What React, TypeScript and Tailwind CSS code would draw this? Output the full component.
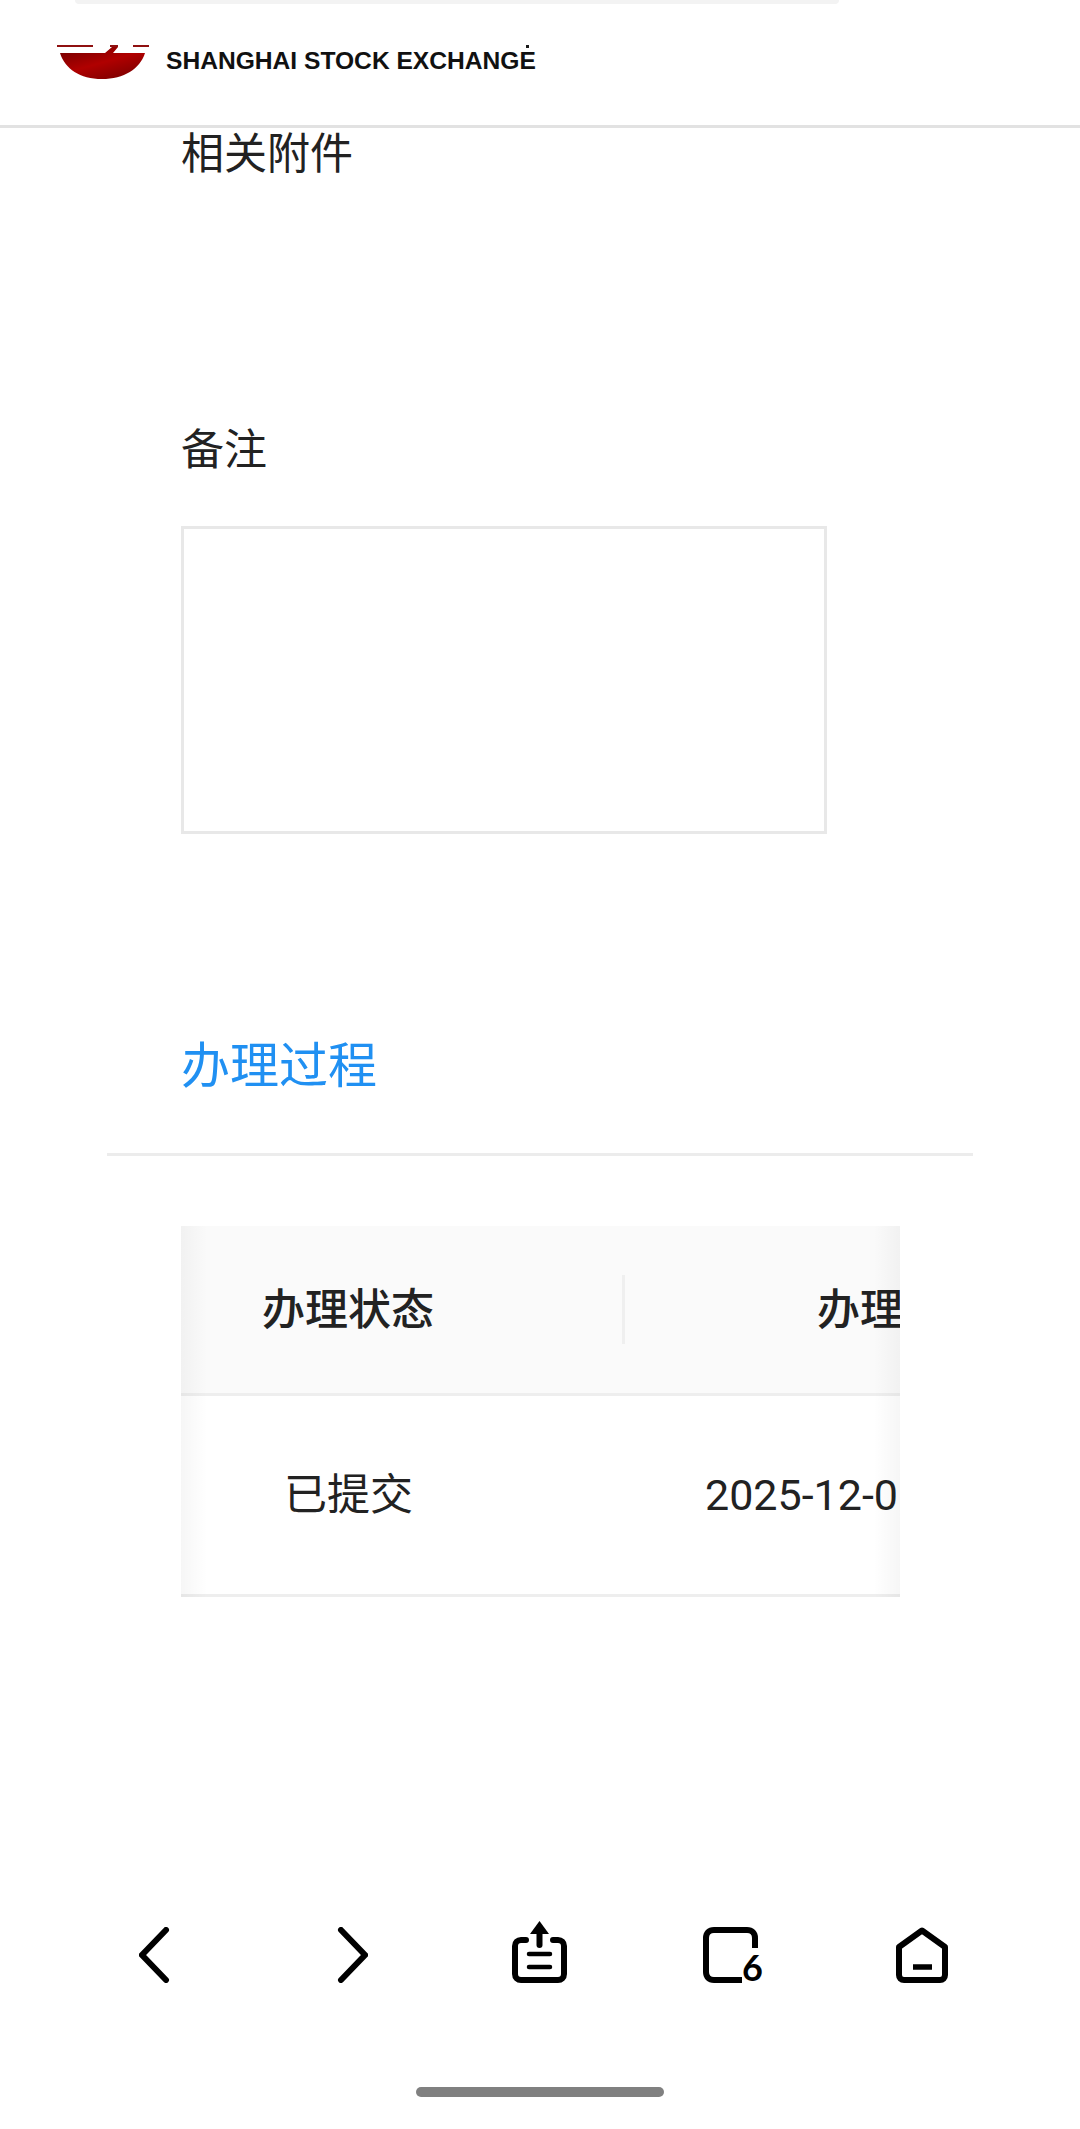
import React from 'react';

const cjk = 'font-["Roboto","Noto_Sans_CJK_SC",sans-serif]';

const Bowl = () => (
  <svg width="94" height="35" viewBox="0 0 94 35" className="shrink-0">
    <defs>
      <linearGradient id="bowl" x1="0" y1="0" x2="0.75" y2="1">
        <stop offset="0" stopColor="#6f0000" />
        <stop offset="0.55" stopColor="#b00000" />
        <stop offset="1" stopColor="#7d0000" />
      </linearGradient>
    </defs>
    <rect x="1" y="0" width="36" height="2" fill="#8f1010" />
    <rect x="54" y="0" width="8" height="2" fill="#8f1010" />
    <rect x="77" y="0" width="16" height="2" fill="#8f1010" />
    <path d="M4 8H49L56 2H62L57 8H89C84 24 68 34 46 34C24 34 9 24 4 8Z" fill="url(#bowl)" />
  </svg>
);

const IconBack = () => (
  <svg width="31" height="56" viewBox="0 0 31 56" fill="none" stroke="#000" strokeWidth="6" strokeLinecap="round" strokeLinejoin="miter">
    <path d="M27 3L3 28L27 53" />
  </svg>
);

const IconForward = () => (
  <svg width="31" height="56" viewBox="0 0 31 56" fill="none" stroke="#000" strokeWidth="6" strokeLinecap="round" strokeLinejoin="miter">
    <path d="M4 3L28 28L4 53" />
  </svg>
);

const IconShare = () => (
  <svg width="55" height="62" viewBox="0 0 55 62" fill="none" stroke="#000" strokeWidth="6" strokeLinecap="round">
    <path d="M14 19H9C5.5 19 3 21.5 3 25V53C3 56.5 5.5 59 9 59H46C49.5 59 52 56.5 52 53V25C52 21.5 49.5 19 46 19H41" />
    <path d="M27.5 12V24" />
    <path d="M27.5 0L37 13H18Z" fill="#000" stroke="none" />
    <path d="M17 33H38M17 46H38" strokeWidth="4.5" />
  </svg>
);

const IconTabs = () => (
  <svg width="60" height="56" viewBox="0 0 60 56" fill="none" stroke="#000" strokeWidth="6">
    <path d="M52 21V11C52 6 49 3 44 3H11C6 3 3 6 3 11V45C3 50 6 53 11 53H39" />
    <text x="39" y="54" fontSize="36" fontFamily="Lato, sans-serif" fontWeight="700" fill="#000" stroke="none">6</text>
  </svg>
);

const IconHome = () => (
  <svg width="52" height="56" viewBox="0 0 52 56" fill="none" stroke="#000" strokeWidth="6" strokeLinejoin="round">
    <path d="M26 3.5L3 20V48C3 51 5 53 8 53H44C47 53 49 51 49 48V20Z" />
    <path d="M17 40H36" strokeWidth="5.5" />
  </svg>
);

export default function App() {
  return (
    <div className={`${cjk} flex h-[2129px] w-[1080px] flex-col overflow-hidden bg-white text-[#222]`}>
      <header className="relative h-[128px] shrink-0 border-b-[3px] border-[#e2e2e2]">
        <div className="ml-[75px] h-1 w-[764px] rounded-b-[12px] bg-[#f3f3f3]" />
        <div className="mt-[41px] ml-[56px] flex items-start">
          <Bowl />
          <span className='mt-[4px] ml-[16px] font-["Liberation_Sans",sans-serif] text-[24.6px] leading-[24px] font-bold text-[#111]'>
            SHANGHAI STOCK EXCHANGE
          </span>
          <span className="absolute top-[45px] left-[526px] h-[3px] w-[3px] bg-[#1a1a1a]" />
        </div>
      </header>

      <main className="flex-1">
        <section className="px-[181px] text-[43px] leading-[52px]">
          <div>相关附件</div>
          <div className="mt-[244px]">备注</div>
        </section>

        <div className="mt-[50px] ml-[181px] h-[308px] w-[646px] border-[3px] border-[#e8e8e8]" />

        <h2 className="mt-[206px] ml-[181px] text-[49px] leading-[54px] text-[#2090f2]">办理过程</h2>

        <div className="mx-[107px] mt-[59px] h-[3px] w-[866px] bg-[#ececec]" />

        <div className="relative mt-[70px] ml-[181px] w-[719px] overflow-hidden whitespace-nowrap">
          <div className="flex h-[170px] items-center border-b-[3px] border-[#eeeeee] bg-[#fafafa] font-medium">
            <div className="w-[441px] shrink-0 pl-[81px]">
              <span className="text-[43px] leading-[52px]">办理状态</span>
            </div>
            <div className="h-[69px] w-[3px] shrink-0 bg-[#efefef]" />
            <div className="pl-[192px] text-[43px] leading-[52px]">办理时间</div>
          </div>
          <div className="flex h-[201px] items-center border-b-[3px] border-[#eeeeee] text-[43px] leading-[52px]">
            <div className="w-[444px] shrink-0 pl-[103px]">已提交</div>
            <div className="pl-[80px]">2025-12-01</div>
          </div>
          <div className="absolute inset-y-0 left-0 w-[26px] bg-gradient-to-r from-[#00000009] to-transparent" />
          <div className="absolute inset-y-0 right-0 w-[26px] bg-gradient-to-l from-[#00000009] to-transparent" />
        </div>
      </main>

      <nav className="flex shrink-0 items-end pl-[139px]">
        <IconBack />
        <div className="ml-[167px]"><IconForward /></div>
        <div className="ml-[144px]"><IconShare /></div>
        <div className="ml-[136px]"><IconTabs /></div>
        <div className="ml-[133px]"><IconHome /></div>
      </nav>

      <div className="flex h-[146px] shrink-0 justify-center pt-[104px]">
        <div className="h-[10px] w-[248px] rounded-full bg-[#808080]" />
      </div>
    </div>
  );
}
